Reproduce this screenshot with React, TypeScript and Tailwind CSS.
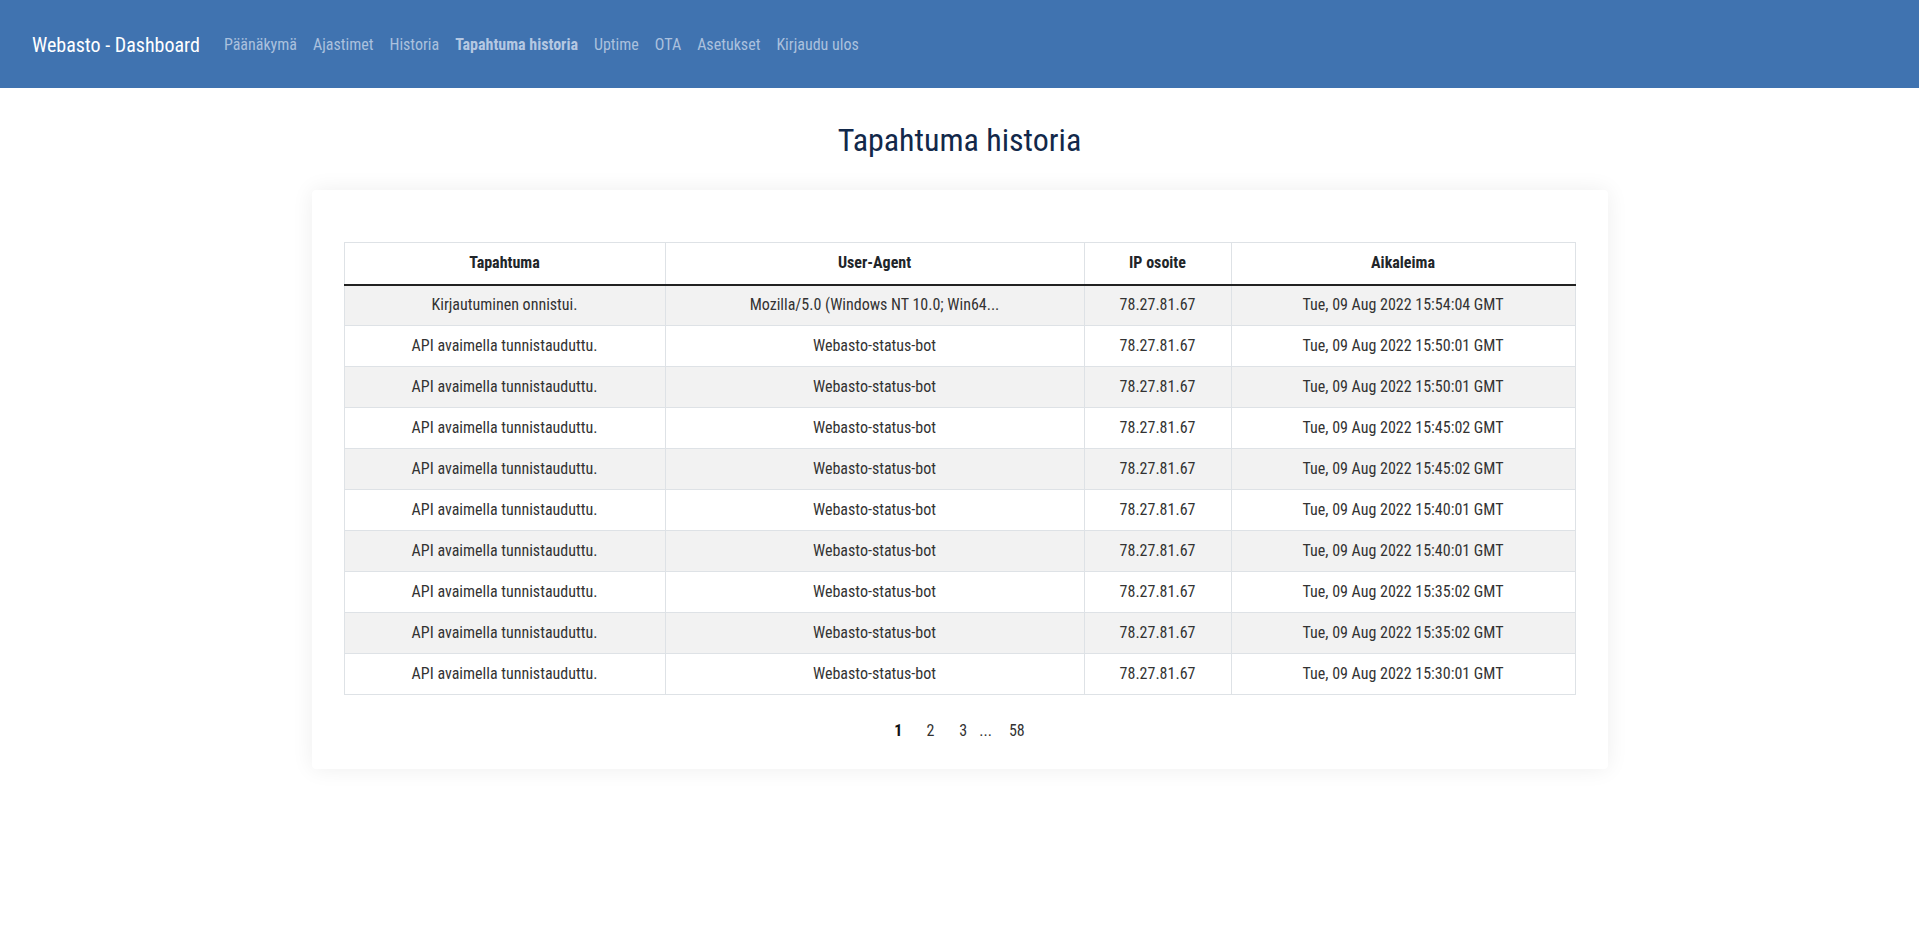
import React from 'react';

const NAV_LINKS = [
  { label: 'Päänäkymä' },
  { label: 'Ajastimet' },
  { label: 'Historia' },
  { label: 'Tapahtuma historia', active: true },
  { label: 'Uptime' },
  { label: 'OTA' },
  { label: 'Asetukset' },
  { label: 'Kirjaudu ulos' },
];

const ROWS = [
  ['Kirjautuminen onnistui.', 'Mozilla/5.0 (Windows NT 10.0; Win64...', '78.27.81.67', 'Tue, 09 Aug 2022 15:54:04 GMT'],
  ['API avaimella tunnistauduttu.', 'Webasto-status-bot', '78.27.81.67', 'Tue, 09 Aug 2022 15:50:01 GMT'],
  ['API avaimella tunnistauduttu.', 'Webasto-status-bot', '78.27.81.67', 'Tue, 09 Aug 2022 15:50:01 GMT'],
  ['API avaimella tunnistauduttu.', 'Webasto-status-bot', '78.27.81.67', 'Tue, 09 Aug 2022 15:45:02 GMT'],
  ['API avaimella tunnistauduttu.', 'Webasto-status-bot', '78.27.81.67', 'Tue, 09 Aug 2022 15:45:02 GMT'],
  ['API avaimella tunnistauduttu.', 'Webasto-status-bot', '78.27.81.67', 'Tue, 09 Aug 2022 15:40:01 GMT'],
  ['API avaimella tunnistauduttu.', 'Webasto-status-bot', '78.27.81.67', 'Tue, 09 Aug 2022 15:40:01 GMT'],
  ['API avaimella tunnistauduttu.', 'Webasto-status-bot', '78.27.81.67', 'Tue, 09 Aug 2022 15:35:02 GMT'],
  ['API avaimella tunnistauduttu.', 'Webasto-status-bot', '78.27.81.67', 'Tue, 09 Aug 2022 15:35:02 GMT'],
  ['API avaimella tunnistauduttu.', 'Webasto-status-bot', '78.27.81.67', 'Tue, 09 Aug 2022 15:30:01 GMT'],
];

const HEADERS = [
  { label: 'Tapahtuma', w: 'w-[321px]' },
  { label: 'User-Agent', w: 'w-[419px]' },
  { label: 'IP osoite', w: 'w-[147px]' },
  { label: 'Aikaleima', w: 'w-[344px]' },
];

export default function App() {
  return (
    <div className="min-h-screen w-full bg-white font-['Roboto_Condensed','Liberation_Sans_Narrow','DejaVu_Sans_Condensed',sans-serif] text-[#212529]">
      {/* ── Navbar ───────────────────────────────────────── */}
      <nav className="h-[88px] bg-[#4073b0] flex items-center px-8 pt-[2px]">
        <span className="text-white text-[20px] mr-[16px]">Webasto - Dashboard</span>
        <ul className="flex items-center">
          {NAV_LINKS.map((l) => (
            <li
              key={l.label}
              className={
                l.active
                  ? 'px-2 text-[16px] font-bold text-[#b5c8e2]'
                  : 'px-2 text-[16px] text-[#abc1de]'
              }
            >
              {l.label}
            </li>
          ))}
        </ul>
      </nav>

      {/* ── Content ──────────────────────────────────────── */}
      <main className="flex flex-col items-center">
        <h1 className="mt-[32px] mb-[30px] text-[32px] leading-[40px] text-[#12284a]">Tapahtuma historia</h1>

        <div className="w-[1296px] bg-white rounded-[4px] shadow-[0_0_22px_rgba(0,0,0,0.07)] px-8 pt-[52px] pb-[26px]">
          <table className="w-full border-collapse text-center text-[16px]">
            <thead>
              <tr className="h-[42px]">
                {HEADERS.map((h) => (
                  <th
                    key={h.label}
                    className={`${h.w} border border-[#dee2e6] border-b-2 border-b-[#222] font-bold`}
                  >
                    {h.label}
                  </th>
                ))}
              </tr>
            </thead>
            <tbody>
              {ROWS.map((r, i) => (
                <tr key={i} className={i % 2 === 0 ? 'h-[41px] bg-[#f2f2f2]' : 'h-[41px] bg-white'}>
                  {r.map((c, j) => (
                    <td key={j} className="border border-[#dee2e6] text-[#333]">
                      {c}
                    </td>
                  ))}
                </tr>
              ))}
            </tbody>
          </table>

          {/* Pagination */}
          <div className="flex items-center justify-center mt-[24px] text-[16px] text-[#333]">
            <span className="font-bold text-[#111]">1</span>
            <span className="ml-[24px]">2</span>
            <span className="ml-[25px]">3</span>
            <span className="ml-[12px]">...</span>
            <span className="ml-[17px]">58</span>
          </div>
        </div>
      </main>
    </div>
  );
}
